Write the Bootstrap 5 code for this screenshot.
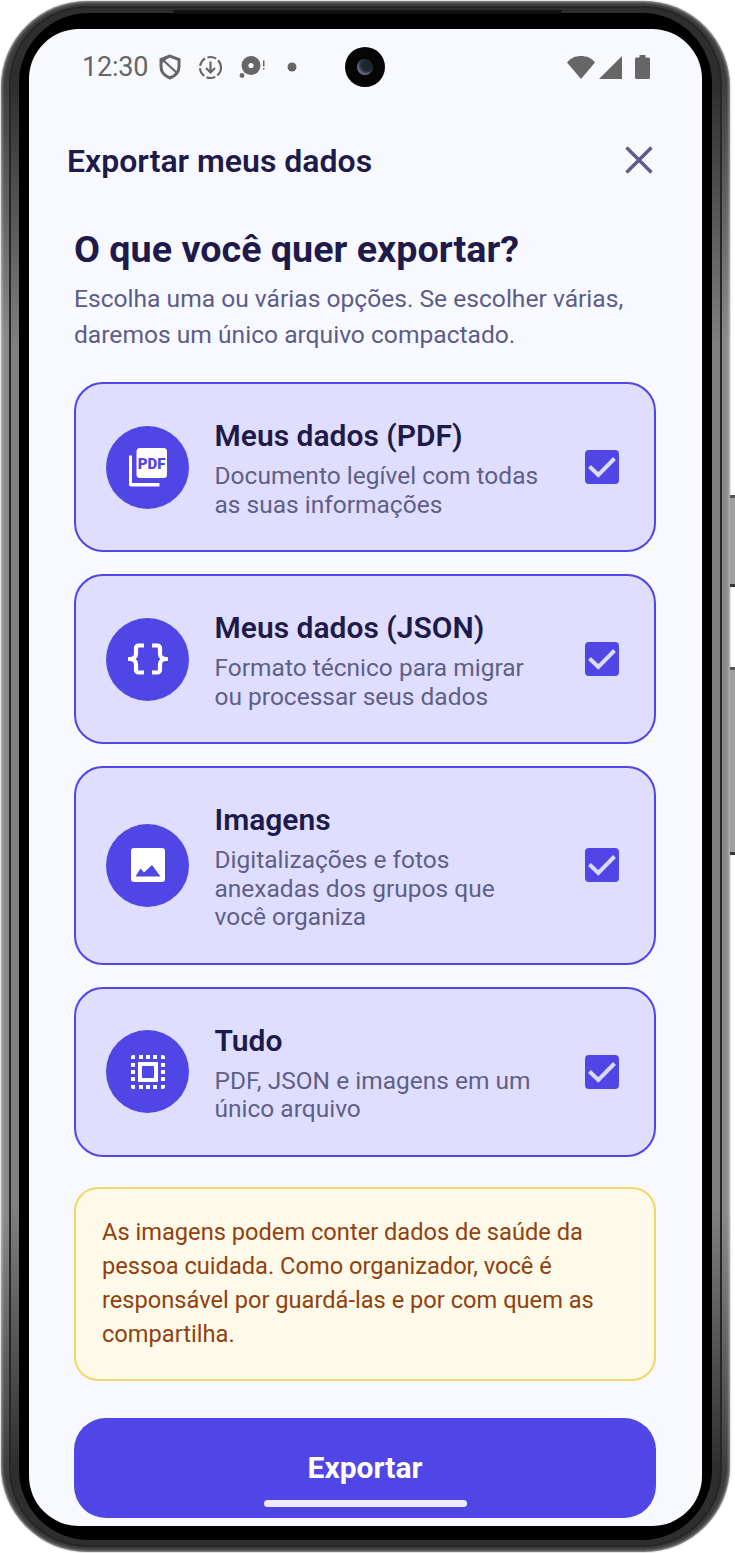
<!DOCTYPE html>
<html lang="pt-BR">
<head>
    <meta charset="UTF-8">
    <meta name="viewport" content="width=device-width, initial-scale=1.0">
    <title>Exportar meus dados</title>
    <link href="https://cdn.jsdelivr.net/npm/bootstrap@5.3.3/dist/css/bootstrap.min.css" rel="stylesheet">
    <style>
        body { margin: 0; background: #fff; font-family: Roboto, "Liberation Sans", sans-serif; width: 735px; height: 1553px; overflow: hidden; }
        .phone-shell { position: relative; width: 729px; height: 1551px; margin: 1px 0 0 1px; padding: 5px 8px; border-radius: 86px; background: linear-gradient(180deg, #3c3c3c 5%, #8a8a8a 22%, #8a8a8a 78%, #3c3c3c 95%); box-shadow: inset 0 0 3px 1px rgba(255,255,255,.5), 0 0 2px rgba(0,0,0,.4); }
        .phone-rim { height: 100%; padding: 5px 8px; border: 2px solid #262626; border-radius: 78px; background: linear-gradient(180deg, #2e2e2e 5%, #808080 22%, #808080 78%, #2e2e2e 95%); }
        .phone-bezel { height: 100%; padding: 16px 10px 14px; border-radius: 70px; background: #000; }
        .phone-screen { position: relative; height: 100%; overflow: hidden; border-radius: 50px; background: #f8f9ff; }
        .top-slit { position: absolute; left: 172px; top: 9px; width: 389px; height: 4px; border-radius: 0 0 6px 6px; background: #111; }
        .side-key { position: absolute; right: -5px; width: 5px; background: #a0a0a0; border-top: 3px solid #555; border-bottom: 3px solid #333; }
        .key-power { top: 494px; height: 92px; }
        .key-volume { top: 666px; height: 188px; }
        .status-row { height: 76px; padding: 0 52px 0 53px; color: #666; font-size: 27px; }
        .status-clock { width: 68px; font-weight: 400; letter-spacing: -.2px; }
        .status-dot { margin-left: 22px; }
        .cam-hole { position: absolute; left: 316px; top: 18px; width: 40px; height: 40px; border-radius: 50%; background: #050505; }
        .cam-hole::after { content: ""; position: absolute; left: 12px; top: 12px; width: 16px; height: 16px; border-radius: 50%; background: #1d2530; box-shadow: inset 2px -2px 3px #6b7280; }
        .sheet-head { height: 56px; margin-top: 28px; padding: 0 48px 0 38px; }
        .sheet-title { font-size: 32px; font-weight: 600; color: #1e1b4b; margin: 0; }
        .close-x { margin-top: -2px; }
        .sheet-body { padding: 0 46px 0 45px; }
        .big-question { font-size: 37.7px; line-height: 44px; font-weight: 700; color: #1e1b4b; margin: 38px 0 0; }
        .big-hint { font-size: 24.6px; line-height: 35.5px; color: #5c5c8a; margin: 10px 0 30px; }
        .opt-card { border: 2px solid #4f46e5; border-radius: 29px; background: #e0deff; padding: 34px 35px 31px 30px; margin-bottom: 22px; }
        .opt-circle { width: 83px; height: 83px; border-radius: 50%; background: #4f46e5; flex: none; margin-right: 25.5px; margin-top: -3px; }
        .opt-title { font-size: 30px; line-height: 36px; font-weight: 600; color: #1e1b4b; margin-bottom: 8px; }
        .opt-desc { font-size: 24.5px; line-height: 28.5px; color: #5f5f87; }
        .opt-check { width: 34px; height: 34px; border-radius: 4px; background: #4f46e5; flex: none; margin-top: -3px; }
        .warn-box { border: 2px solid #f2d666; border-radius: 24px; background: #fdfae9; color: #92400e; font-size: 23.65px; line-height: 34px; padding: 26px 26px 28px; margin-top: 30px; }
        .export-btn { display: block; width: 100%; height: 100px; margin-top: 37px; padding: 0; border: 0; border-radius: 32px; background: #4f46e5; color: #fff; font-size: 30px; font-weight: 700; }
        .export-btn:hover { background: #4f46e5; color: #fff; }
        .home-pill { position: absolute; left: 235px; top: 1471px; width: 203px; height: 7px; border-radius: 4px; background: #eeeaff; }
    </style>
</head>
<body>
    <div class="phone-shell">
        <div class="top-slit"></div>
        <div class="side-key key-power"></div>
        <div class="side-key key-volume"></div>
        <div class="phone-rim">
            <div class="phone-bezel">
                <div class="phone-screen">
                    <!-- status bar -->
                    <div class="status-row d-flex align-items-center">
                        <span class="status-clock">12:30</span>
                        <svg class="ms-2" width="24" height="26" viewBox="0 0 24 26"><path d="M12 2 3 5.500v7c0 5.500 3.800 9.500 9 11.500 5.200-2 9-6 9-11.500v-7z" fill="none" stroke="#666" stroke-width="3"/><path d="M5 6 19 19" stroke="#666" stroke-width="2.200"/><path d="M12 2 3 5.500v5z" fill="#666"/></svg>
                        <svg class="ms-3" width="25" height="25" viewBox="0 0 25 25" fill="none" stroke="#666" stroke-width="2.200"><circle cx="12.500" cy="12.500" r="10.500" stroke-dasharray="9 2.500"/><path d="M12.500 6.500v11M8 13l4.500 4.500L17 13"/></svg>
                        <svg class="ms-3" width="26" height="24" viewBox="0 0 26 24"><circle cx="12" cy="10.500" r="9.500" fill="#666"/><circle cx="12" cy="10.500" r="2.600" fill="#f8f9ff"/><circle cx="3" cy="20.500" r="2.400" fill="#666"/><path d="M24 5.500h1.500v6H24z M24 13h1.500v1.500H24z" fill="#666"/></svg>
                        <svg class="status-dot" width="10" height="10" viewBox="0 0 10 10"><circle cx="5" cy="5" r="4.500" fill="#666"/></svg>
                        <div class="ms-auto d-flex align-items-center gap-1">
                            <svg width="28" height="24" viewBox="0 0 28 24"><path d="M0 7.500C3.500 3 8.500 1 14 1s10.500 2 14 6.500L14 24z" fill="#666"/></svg>
                            <svg width="24" height="24" viewBox="0 0 24 24"><path d="M0 24 23 1v23z" fill="#666"/></svg>
                            <svg class="ms-2" width="15" height="24" viewBox="0 0 15 24"><path d="M4.500 0h6v2.500h3a1.500 1.500 0 0 1 1.500 1.500v18.500a1.500 1.500 0 0 1-1.500 1.500h-12A1.500 1.500 0 0 1 0 22.500V4a1.500 1.500 0 0 1 1.500-1.500h3z" fill="#666"/></svg>
                        </div>
                    </div>
                    <div class="cam-hole"></div>

                    <!-- cabecalho -->
                    <div class="sheet-head d-flex align-items-center justify-content-between">
                        <h1 class="sheet-title">Exportar meus dados</h1>
                        <svg class="close-x" width="30" height="30" viewBox="0 0 30 30"><path d="M2.500 2.500 27.500 27.500M27.500 2.500 2.500 27.500" stroke="#5c5c8a" stroke-width="3.400"/></svg>
                    </div>

                    <div class="sheet-body">
                        <h2 class="big-question">O que você quer exportar?</h2>
                        <p class="big-hint">Escolha uma ou várias opções. Se escolher várias, daremos um único arquivo compactado.</p>

                        <div class="opt-card d-flex align-items-center">
                            <div class="opt-circle d-flex align-items-center justify-content-center">
                                <svg width="40" height="40" viewBox="0 0 40 40"><rect x="8.500" y="1" width="30.500" height="30" rx="3.500" fill="#fff"/><path d="M1 8.500h3V36h27.500v3.500H3a2 2 0 0 1-2-2z" fill="#fff"/><text x="23.700" y="21.500" text-anchor="middle" font-family="Roboto" font-size="15" font-weight="900" fill="#4f46e5">PDF</text></svg>
                            </div>
                            <div class="flex-grow-1">
                                <div class="opt-title">Meus dados (PDF)</div>
                                <div class="opt-desc">Documento legível com todas<br>as suas informações</div>
                            </div>
                            <div class="opt-check"><svg width="34" height="34" viewBox="0 0 34 34"><path d="M4.500 16.500 13.300 25 29.500 8.500" fill="none" stroke="#dcdaff" stroke-width="4"/></svg></div>
                        </div>

                        <div class="opt-card d-flex align-items-center">
                            <div class="opt-circle d-flex align-items-center justify-content-center">
                                <svg width="40" height="32" viewBox="0 0 40 32" fill="none" stroke="#fff" stroke-width="4.200" stroke-linejoin="round"><path d="M16 2.500H10.500a2.500 2.500 0 0 0-2.500 2.500v6c0 2.800-2.500 5-6.500 5 4 0 6.500 2.200 6.500 5v6a2.500 2.500 0 0 0 2.500 2.500H16"/><path d="M24 2.500h5.500a2.500 2.500 0 0 1 2.500 2.500v6c0 2.800 2.500 5 6.500 5-4 0-6.500 2.200-6.500 5v6a2.500 2.500 0 0 1-2.500 2.500H24"/></svg>
                            </div>
                            <div class="flex-grow-1">
                                <div class="opt-title">Meus dados (JSON)</div>
                                <div class="opt-desc">Formato técnico para migrar<br>ou processar seus dados</div>
                            </div>
                            <div class="opt-check"><svg width="34" height="34" viewBox="0 0 34 34"><path d="M4.500 16.500 13.300 25 29.500 8.500" fill="none" stroke="#dcdaff" stroke-width="4"/></svg></div>
                        </div>

                        <div class="opt-card d-flex align-items-center">
                            <div class="opt-circle d-flex align-items-center justify-content-center">
                                <svg width="34" height="34" viewBox="0 0 34 34"><path d="M3 0h28a3 3 0 0 1 3 3v28a3 3 0 0 1-3 3H3a3 3 0 0 1-3-3V3a3 3 0 0 1 3-3z" fill="#fff"/><path d="M4.500 28.500 9.500 20.500 13 24.500 21 17 29.500 28.500z" fill="#4f46e5"/></svg>
                            </div>
                            <div class="flex-grow-1">
                                <div class="opt-title">Imagens</div>
                                <div class="opt-desc">Digitalizações e fotos<br>anexadas dos grupos que<br>você organiza</div>
                            </div>
                            <div class="opt-check"><svg width="34" height="34" viewBox="0 0 34 34"><path d="M4.500 16.500 13.300 25 29.500 8.500" fill="none" stroke="#dcdaff" stroke-width="4"/></svg></div>
                        </div>

                        <div class="opt-card d-flex align-items-center">
                            <div class="opt-circle d-flex align-items-center justify-content-center">
                                <svg width="36" height="36" viewBox="0 0 36 36" fill="#fff"><path d="M12 12h12v12H12z M8 8v20h20V8z" fill-rule="evenodd"/><path d="M1 5V3a2 2 0 0 1 2-2h2v4z M9 1h4v4H9z M16 1h4v4h-4z M23 1h4v4h-4z M31 1h2a2 2 0 0 1 2 2v2h-4z M1 9h4v4H1z M1 16h4v4H1z M1 23h4v4H1z M31 9h4v4h-4z M31 16h4v4h-4z M31 23h4v4h-4z M1 31h4v4H3a2 2 0 0 1-2-2z M9 31h4v4H9z M16 31h4v4h-4z M23 31h4v4h-4z M31 31h4v2a2 2 0 0 1-2 2h-2z"/></svg>
                            </div>
                            <div class="flex-grow-1">
                                <div class="opt-title">Tudo</div>
                                <div class="opt-desc">PDF, JSON e imagens em um<br>único arquivo</div>
                            </div>
                            <div class="opt-check"><svg width="34" height="34" viewBox="0 0 34 34"><path d="M4.500 16.500 13.300 25 29.500 8.500" fill="none" stroke="#dcdaff" stroke-width="4"/></svg></div>
                        </div>

                        <div class="warn-box">As imagens podem conter dados de saúde da pessoa cuidada. Como organizador, você é responsável por guardá-las e por com quem as compartilha.</div>
                        <button type="button" class="btn export-btn">Exportar</button>
                    </div>
                    <div class="home-pill"></div>
                </div>
            </div>
        </div>
    </div>
</body>
</html>
